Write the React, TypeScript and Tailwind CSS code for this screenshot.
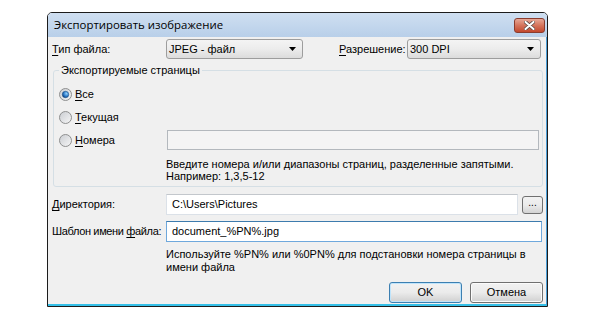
import React from 'react';

const body = { fontFamily: '"Liberation Sans", Arial, sans-serif' };
const title = { fontFamily: '"Open Sans", "Noto Sans", sans-serif' };

function Key({ children }: { children: React.ReactNode }) {
  return <u className="underline decoration-1 underline-offset-[2px]">{children}</u>;
}

function Arrow() {
  return (
    <svg width="8" height="4" viewBox="0 0 8 4">
      <path d="M0 0 H7 L3.5 4 Z" fill="#000" />
    </svg>
  );
}

function Select({ value, w }: { value: string; w: string }) {
  return (
    <div
      className={`${w} shrink-0 h-[20px] flex items-center justify-between rounded-[3px] border border-[#9d9d9d] bg-gradient-to-b from-[#f4f4f4] via-[#ececec] to-[#dcdcdc] pl-[2px] pr-[5px]`}
    >
      <span>{value}</span>
      <Arrow />
    </div>
  );
}

function Radio({ checked }: { checked?: boolean }) {
  return (
    <svg width="13" height="13" viewBox="0 0 13 13" className="shrink-0">
      <defs>
        <linearGradient id="rb" x1="0" y1="0" x2="1" y2="1">
          <stop offset="0" stopColor="#c9ccd1" />
          <stop offset="1" stopColor="#f7f7f7" />
        </linearGradient>
        <radialGradient id="rd" cx="0.65" cy="0.35" r="0.7">
          <stop offset="0" stopColor="#93d0fa" />
          <stop offset="0.6" stopColor="#2d7ccb" />
          <stop offset="1" stopColor="#0d3f7c" />
        </radialGradient>
      </defs>
      <circle cx="6.5" cy="6.5" r="6" fill="url(#rb)" stroke="#8e8f8f" />
      {checked && <circle cx="6.5" cy="6.5" r="3.2" fill="url(#rd)" stroke="#1b4f86" strokeWidth="0.6" />}
    </svg>
  );
}

function RadioRow({ label, checked }: { label: React.ReactNode; checked?: boolean }) {
  return (
    <div className="w-[113px] shrink-0 h-[20px] flex items-center gap-[3px] pl-[5px]">
      <Radio checked={checked} />
      <span>{label}</span>
    </div>
  );
}

function Button({ children, primary }: { children: React.ReactNode; primary?: boolean }) {
  return (
    <div
      className={`w-[73px] h-[21px] flex items-center justify-center rounded-[3px] border ${
        primary ? 'border-[#3c7fb1] shadow-[inset_0_0_0_1px_#bfe4fb]' : 'border-[#707070] shadow-[inset_0_0_0_1px_#fbfbfb]'
      } bg-gradient-to-b from-[#f2f2f2] via-[#ebebeb] to-[#d0d0d0]`}
    >
      {children}
    </div>
  );
}

export default function App() {
  return (
    <div className="w-[600px] h-[321px] bg-white pt-[12px] pl-[47px] text-[11px] text-black" style={body}>
      <div className="w-[501px] h-[295px] flex flex-col border border-[#1c1c1c] rounded-tl-[5px] rounded-tr-[5px] overflow-hidden">
        {/* Title bar */}
        <div className="h-[24px] flex items-center justify-between pl-[6px] pr-[2px] bg-gradient-to-b from-[#cfdff1] to-[#b8cfe9]">
          <span className="text-[11.4px]" style={title}>
            Экспортировать изображение
          </span>
          <div className="w-[31px] h-[15px] mt-[1px] flex items-center justify-center rounded-[3px] border border-[#8a3c2e] bg-gradient-to-b from-[#e6a796] via-[#d4735b] to-[#c2472c]">
            <svg width="11" height="9" viewBox="0 0 11 9">
              <path d="M1.5 1 L9.5 8 M9.5 1 L1.5 8" stroke="#5a4a46" strokeWidth="3.6" strokeLinecap="round" />
              <path d="M1.5 1 L9.5 8 M9.5 1 L1.5 8" stroke="#fff" strokeWidth="2" strokeLinecap="round" />
            </svg>
          </div>
        </div>

        {/* Content */}
        <div className="flex-1 flex flex-col bg-[#f0f0f0] pl-[4px] pr-[2px] border-r border-r-[#4c9fd8] border-b-2 border-b-[#35c0e8]">
          {/* File type / resolution */}
          <div className="mt-[2px] h-[20px] flex items-center whitespace-nowrap">
            <span className="w-[114px] shrink-0">
              <Key>Т</Key>ип файла:
            </span>
            <Select value="JPEG - файл" w="w-[137px]" />
            <span className="w-[36px] shrink-0" />
            <span className="w-[68px] shrink-0">
              <Key>Р</Key>азрешение:
            </span>
            <Select value="300 DPI" w="w-[134px]" />
          </div>

          {/* Pages group */}
          <fieldset className="mt-[5px] ml-[1px] w-[490px] rounded-[3px] border border-[#d5dfe5] pb-[4px]">
            <legend className="ml-[5px] px-[2px] leading-[13px]">Экспортируемые страницы</legend>
            <div className="pt-[7px] flex flex-col gap-[4px]">
              <RadioRow checked label={<><Key>В</Key>се</>} />
              <div className="-mt-[1px]">
                <RadioRow label={<><Key>Т</Key>екущая</>} />
              </div>
              <div className="-mt-[1px] flex items-center">
                <RadioRow label={<><Key>Н</Key>омера</>} />
                <div className="w-[372px] shrink-0 h-[20px] border border-[#b3b8bd] bg-[#f4f4f4]" />
              </div>
              <div className="ml-[112px] mt-[4px] leading-[12px]">
                Введите номера и/или диапазоны страниц, разделенные запятыми.
                <br />
                Например: 1,3,5-12
              </div>
            </div>
          </fieldset>

          {/* Directory */}
          <div className="mt-[7px] h-[21px] flex items-center whitespace-nowrap">
            <span className="w-[114px] shrink-0">
              <Key>Д</Key>иректория:
            </span>
            <div className="w-[352px] shrink-0 h-[21px] flex items-center pl-[5px] bg-white border border-[#dbe1e8] border-t-[#c3c7cc]">
              C:\Users\Pictures
            </div>
            <div className="ml-[4px] w-[21px] shrink-0 h-[18px] flex items-center justify-center rounded-[3px] border border-[#707070] bg-gradient-to-b from-[#f2f2f2] via-[#ebebeb] to-[#d3d3d3] text-[10px] leading-none pb-[3px]">
              ...
            </div>
          </div>

          {/* File name template */}
          <div className="mt-[6px] h-[21px] flex items-center whitespace-nowrap">
            <span className="w-[114px] shrink-0 tracking-[-0.35px]">
              Шаблон имени <Key>ф</Key>айла:
            </span>
            <div className="w-[376px] shrink-0 h-[21px] flex items-center pl-[5px] bg-white border border-[#6fa8dc] border-t-[#3d7bad]">
              document_%PN%.jpg
            </div>
          </div>

          <div className="ml-[114px] mt-[6px] leading-[13px]">
            Используйте %PN% или %0PN% для подстановки номера страницы в
            <br />
            имени файла
          </div>

          {/* Buttons */}
          <div className="mt-[8px] flex justify-end gap-[8px] pr-[1px]">
            <Button primary>OK</Button>
            <Button>Отмена</Button>
          </div>
        </div>
      </div>
    </div>
  );
}
